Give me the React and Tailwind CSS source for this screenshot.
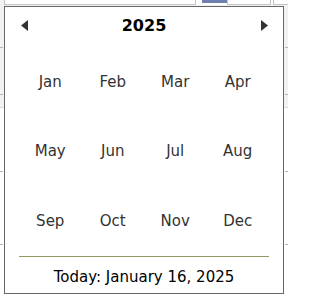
import React from "react";

const MONTHS = ["Jan", "Feb", "Mar", "Apr", "May", "Jun", "Jul", "Aug", "Sep", "Oct", "Nov", "Dec"];

function PageBehind() {
  return (
    <div className="flex flex-col w-full h-full">
      <div className="flex h-[5px] items-end">
        <div className="w-[4px] h-full bg-[#f2f2f2]" />
        <div className="w-[192px] h-full border border-t-0 border-[#c4c4c4] bg-white" />
        <div className="w-[6px]" />
        <div className="w-[25px] h-[3px] self-start bg-[#6e7fb0]" />
        <div className="w-[44px] h-full border border-t-0 border-[#c4c4c4] bg-white" />
        <div className="w-[2px]" />
        <div className="flex-1 h-full border border-t-0 border-r-0 border-[#c4c4c4] bg-white" />
      </div>
      <div className="h-[103px] bg-[#f2f2f2] border-b border-[#dcdcdc] flex flex-col">
        <div className="h-[43px] border-b border-dashed border-[#b5b5b5]" />
        <div className="h-[47px] border-b border-dashed border-[#b5b5b5]" />
      </div>
      <div className="h-[64px] border-b border-dashed border-[#b5b5b5]" />
      <div className="h-[73px] border-b border-dashed border-[#b5b5b5]" />
    </div>
  );
}

export default function App() {
  return (
    <div className="relative w-[288px] h-[298px] bg-white overflow-hidden" style={{ fontFamily: '"DejaVu Sans", Verdana, sans-serif' }}>
      <PageBehind />

      <div className="absolute left-[4px] top-[6px] w-[280px] h-[288px] bg-white border border-[#666] flex flex-col">
        <div className="h-[40px] flex items-center justify-between px-[15px] pb-[3px]">
          <button className="w-[8px] h-[12px] flex items-center justify-center">
            <svg width="7" height="11" viewBox="0 0 7 11">
              <path d="M7 0 L0 5.5 L7 11 Z" fill="#333" />
            </svg>
          </button>
          <div className="text-[16px] font-bold text-black leading-none">2025</div>
          <button className="w-[8px] h-[12px] flex items-center justify-center">
            <svg width="7" height="11" viewBox="0 0 7 11">
              <path d="M0 0 L7 5.5 L0 11 Z" fill="#333" />
            </svg>
          </button>
        </div>

        <div className="mx-[14px] grid grid-cols-4 grid-rows-3 h-[210px] border-b border-[#8c9c60]">
          {MONTHS.map((m) => (
            <div key={m} className="flex items-center justify-center text-[15px] text-[#333]">
              {m}
            </div>
          ))}
        </div>

        <div className="flex-1 flex items-center justify-center text-[15px] text-black pt-[4px]">
          Today: January 16, 2025
        </div>
      </div>
    </div>
  );
}
